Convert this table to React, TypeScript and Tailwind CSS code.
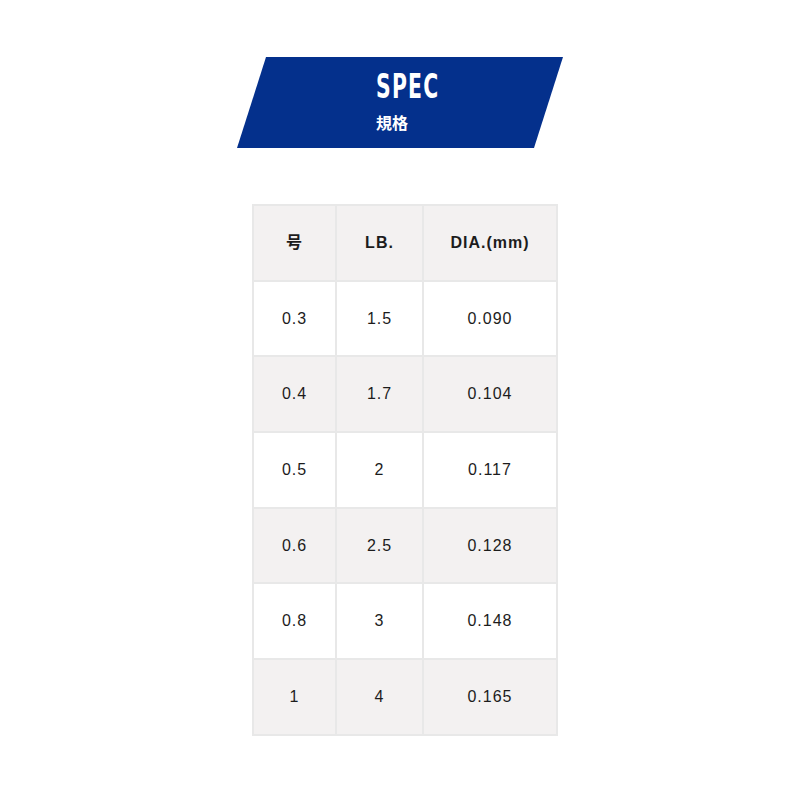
const rows = [
  ["0.3", "1.5", "0.090"],
  ["0.4", "1.7", "0.104"],
  ["0.5", "2", "0.117"],
  ["0.6", "2.5", "0.128"],
  ["0.8", "3", "0.148"],
  ["1", "4", "0.165"],
];

export default function App() {
  return (
    <div className="min-h-[800px] w-[800px] bg-white font-['Liberation_Sans','Noto_Sans_CJK_JP',sans-serif]">
      {/* Title banner */}
      <div className="pt-[57px] pl-[237px]">
        <div className="flex h-[91px] w-[326px] flex-col bg-[#04308c] pl-[139px] pt-[9px] [clip-path:polygon(8.9%_0,100%_0,91.1%_100%,0_100%)]">
          <div className="origin-left scale-x-[0.6] whitespace-nowrap font-['DejaVu_Sans',sans-serif] text-[34px] font-bold leading-[40px] tracking-[2px] text-white">
            SPEC
          </div>
          <div className="mt-[6px] font-['Noto_Sans_CJK_JP',sans-serif] text-[16px] font-bold leading-[20px] text-white">
            規格
          </div>
        </div>
      </div>

      {/* Spec table */}
      <div className="pt-[56px] pl-[252px]">
        <table className="w-[306px] border-collapse text-center text-[16px] tracking-[1px] text-[#1c1c1c]">
          <thead>
            <tr className="h-[75.7px] bg-[#f3f1f1]">
              <th className="w-[83px] border-2 border-[#e8e8e8] font-bold">号</th>
              <th className="w-[87px] border-2 border-[#e8e8e8] font-bold">LB.</th>
              <th className="border-2 border-[#e8e8e8] font-bold">DIA.(mm)</th>
            </tr>
          </thead>
          <tbody>
            {rows.map((r, i) => (
              <tr key={i} className={i % 2 === 0 ? "h-[75.7px] bg-white" : "h-[75.7px] bg-[#f3f1f1]"}>
                <td className="border-2 border-[#e8e8e8]">{r[0]}</td>
                <td className="border-2 border-[#e8e8e8]">{r[1]}</td>
                <td className="border-2 border-[#e8e8e8]">{r[2]}</td>
              </tr>
            ))}
          </tbody>
        </table>
      </div>
    </div>
  );
}
